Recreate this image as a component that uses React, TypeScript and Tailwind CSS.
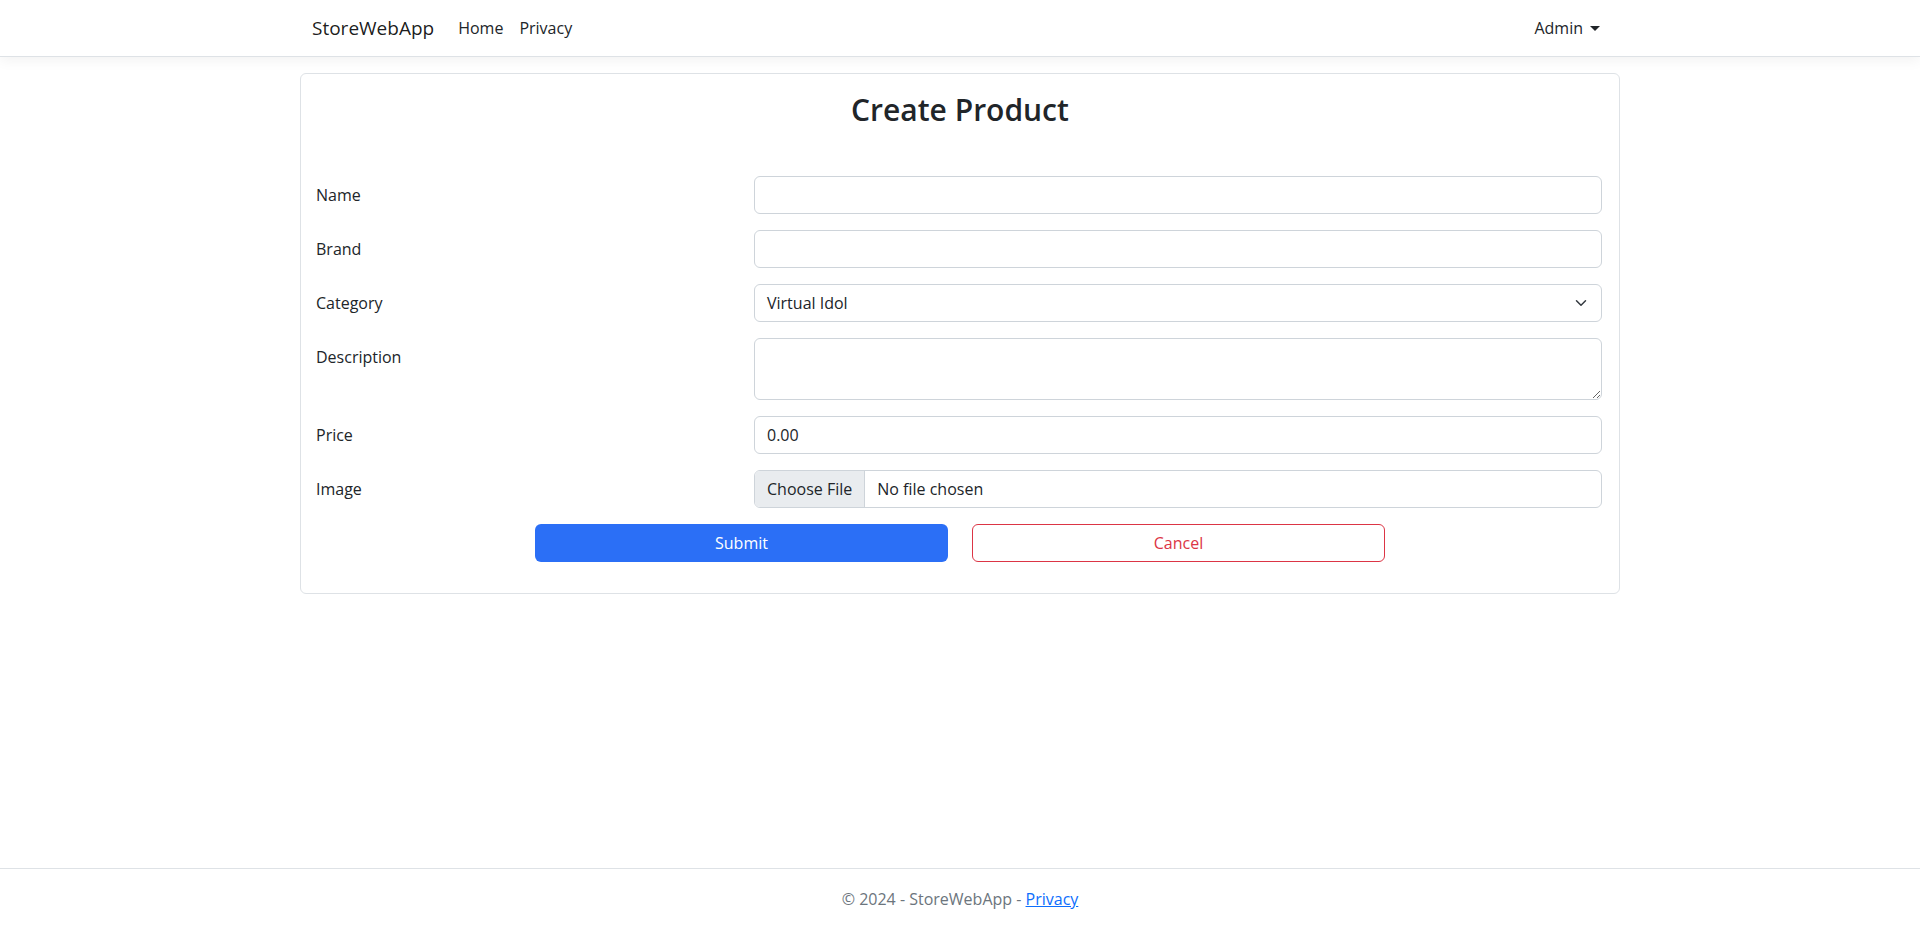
import React from 'react';

const fields = [
  { label: 'Name', value: '' },
  { label: 'Brand', value: '' },
];

function Chevron() {
  return (
    <svg width="16" height="12" viewBox="0 0 16 16" fill="none" className="flex-shrink-0">
      <path d="m2 5 6 6 6-6" stroke="#343a40" strokeWidth="2" strokeLinecap="round" strokeLinejoin="round" />
    </svg>
  );
}

function Row({ label, children }: { label: string; children: React.ReactNode }) {
  return (
    <div className="flex items-start mb-4">
      <label className="w-[438px] pt-[7px] leading-6 text-base">{label}</label>
      <div className="flex-1">{children}</div>
    </div>
  );
}

export default function App() {
  const inputCls =
    'w-full h-[38px] px-3 text-base leading-6 border border-[#ced4da] rounded-[6px] bg-white text-[#212529] outline-none';

  return (
    <div className="min-h-screen flex flex-col bg-white text-[#212529] font-['Open_Sans',sans-serif]">
      <header className="bg-white border-b border-[#dee2e6] shadow-[0_4px_12px_rgba(0,0,0,0.05)]">
        <nav className="w-[1320px] mx-auto px-3 h-14 flex items-center">
          <a className="text-[19px] text-black/90 mr-4 leading-[30px]">StoreWebApp</a>
          <a className="px-2 text-base text-[#212529] leading-6">Home</a>
          <a className="px-2 text-base text-[#212529] leading-6">Privacy</a>
          <a className="ml-auto px-2 text-base text-[#212529] leading-6 flex items-center">
            Admin
            <span className="ml-[7px] w-0 h-0 border-t-[5px] border-t-[#212529] border-x-[5px] border-x-transparent" />
          </a>
        </nav>
      </header>

      <main className="w-[1320px] mx-auto mt-4">
        <div className="border border-[#dee2e6] rounded-[6px] pt-[17px] pb-[31px] pl-[15px] pr-[17px]">
          <h2 className="text-center text-[30px] leading-[38px] font-semibold mb-[47px] pl-[2px]">Create Product</h2>

          {fields.map((f) => (
            <Row key={f.label} label={f.label}>
              <input className={inputCls} defaultValue={f.value} />
            </Row>
          ))}

          <Row label="Category">
            <div className="w-full h-[38px] pl-3 pr-3 flex items-center justify-between border border-[#ced4da] rounded-[6px] bg-white">
              <span className="text-base leading-6">Virtual Idol</span>
              <Chevron />
            </div>
          </Row>

          <Row label="Description">
            <textarea
              rows={2}
              className="block w-full h-[62px] px-3 py-1.5 text-base leading-6 border border-[#ced4da] rounded-[6px] bg-white outline-none"
            />
          </Row>

          <Row label="Price">
            <input className={inputCls} defaultValue="0.00" />
          </Row>

          <Row label="Image">
            <div className="w-full h-[38px] flex items-stretch border border-[#ced4da] rounded-[6px] overflow-hidden bg-white">
              <span className="px-3 flex items-center bg-[#e9ecef] border-r border-[#ced4da] text-base">Choose File</span>
              <span className="px-3 flex items-center text-base">No file chosen</span>
            </div>
          </Row>

          <div className="flex justify-center gap-6 pl-[2px]">
            <button className="w-[413px] h-[38px] rounded-[6px] bg-[#2b6ff6] text-white text-base">Submit</button>
            <button className="w-[413px] h-[38px] rounded-[6px] border border-[#dc3545] text-[#dc3545] bg-white text-base">
              Cancel
            </button>
          </div>
        </div>
      </main>

      <footer className="mt-auto border-t border-[#dee2e6] h-[61px] leading-[60px] text-center text-[#6c757d] text-base">
        © 2024 - StoreWebApp - <a className="text-[#0d6efd] underline">Privacy</a>
      </footer>
    </div>
  );
}
